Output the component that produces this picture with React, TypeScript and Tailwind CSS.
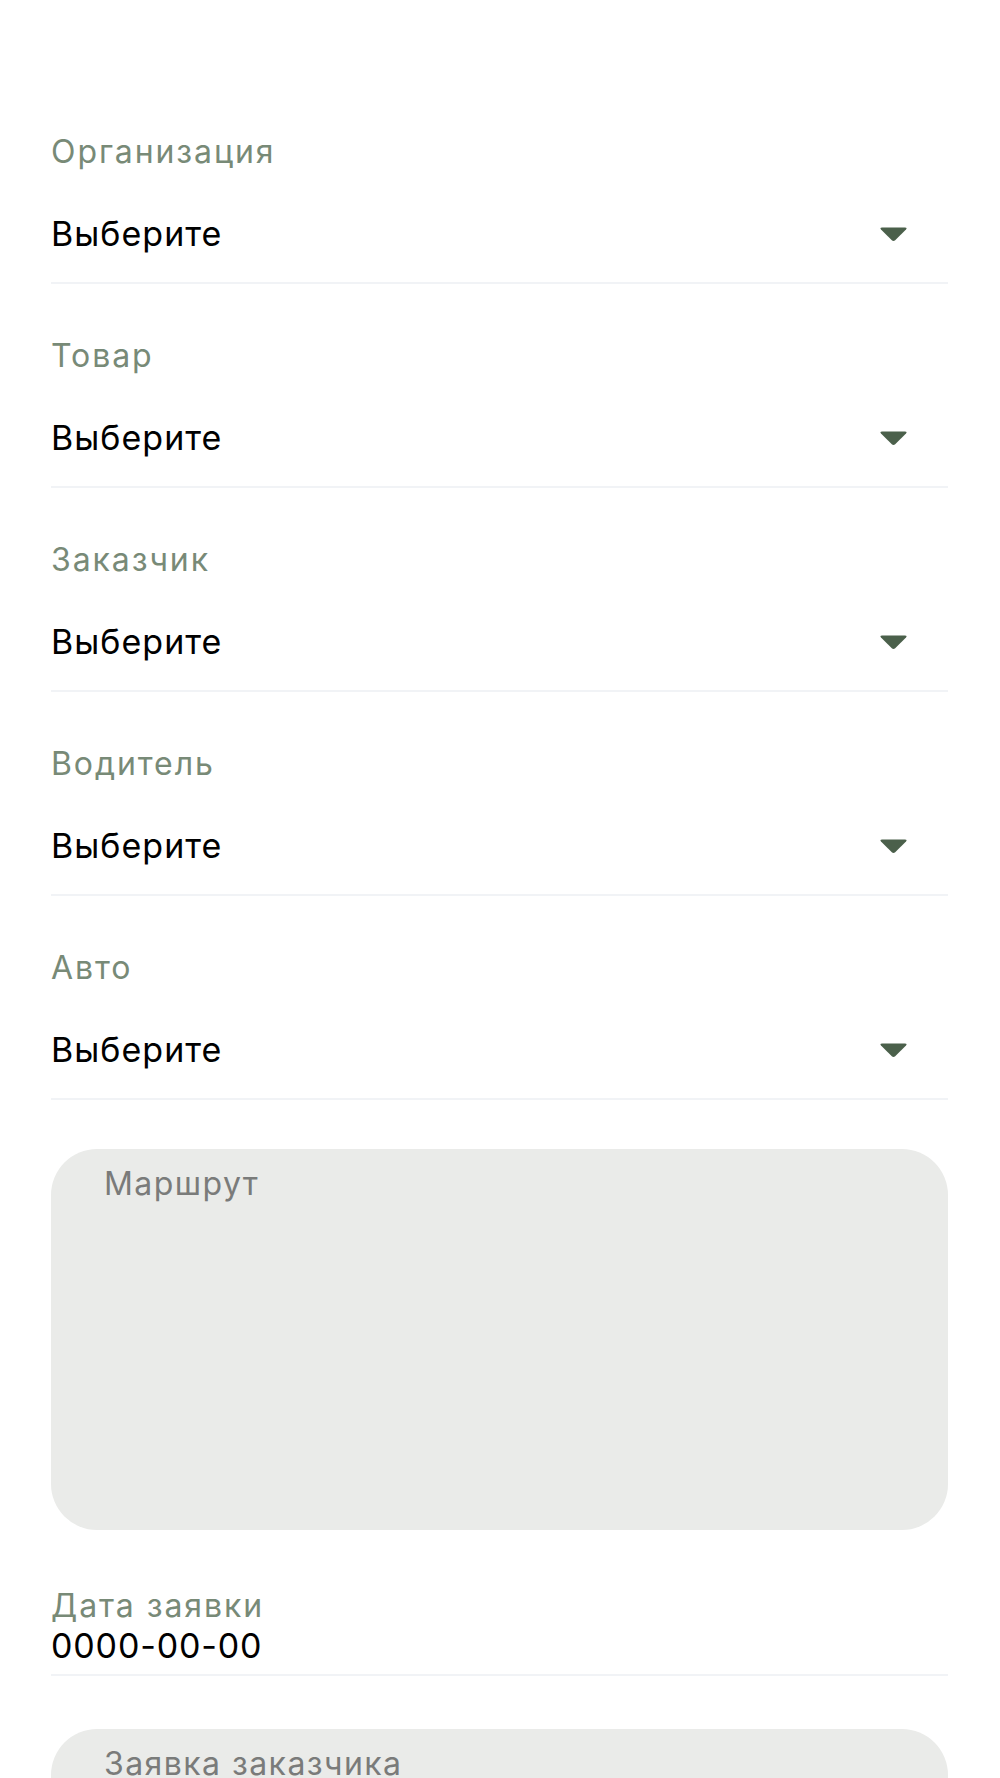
import React from "react";

const fields = ["Организация", "Товар", "Заказчик", "Водитель", "Авто"];

function Caret() {
  return (
    <svg width="29" height="16" viewBox="0 0 29 16" className="mr-[40px]">
      <path
        d="M3 1.5 H26 Q28.5 1.5 27 3.6 L16.2 14.2 Q14.5 15.8 12.8 14.2 L2 3.6 Q0.5 1.5 3 1.5 Z"
        fill="#4b604b"
      />
    </svg>
  );
}

function SelectField({ label }: { label: string }) {
  return (
    <div className="flex flex-col">
      <div className="h-9 text-[32px] leading-9 tracking-[0.06em] text-[#788a77]">
        {label}
      </div>
      <div className="mt-[44px] flex h-10 items-center justify-between">
        <span className="text-[34px] leading-10 tracking-[0.03em] text-black">
          Выберите
        </span>
        <Caret />
      </div>
      <div className="mt-[28px] h-[2px] bg-[#f1f3f6]" />
    </div>
  );
}

function TextArea({ placeholder }: { placeholder: string }) {
  return (
    <div className="h-[381px] rounded-[46px] bg-[#eaebe9] pl-[53px] pt-[16px]">
      <span className="text-[32px] leading-[38px] tracking-[0.045em] text-[#7a7b7a]">
        {placeholder}
      </span>
    </div>
  );
}

export default function App() {
  return (
    <div
      className="min-h-screen bg-white pl-[51px] pr-[52px] pt-[134px]"
      style={{ fontFamily: "Inter, 'Noto Sans', sans-serif" }}
    >
      <div className="flex flex-col gap-[54px]">
        {fields.map((f) => (
          <SelectField key={f} label={f} />
        ))}
      </div>
      <div className="mt-[49px]">
        <TextArea placeholder="Маршрут" />
      </div>
      <div className="mt-[58px] flex flex-col">
        <div className="h-9 text-[32px] leading-9 tracking-[0.06em] text-[#788a77]">
          Дата заявки
        </div>
        <div className="mt-[2px] h-10 text-[34px] leading-10 tracking-[0.025em] text-black">
          0000-00-00
        </div>
        <div className="mt-[8px] h-[2px] bg-[#f1f3f6]" />
      </div>
      <div className="mt-[53px]">
        <TextArea placeholder="Заявка заказчика" />
      </div>
    </div>
  );
}
